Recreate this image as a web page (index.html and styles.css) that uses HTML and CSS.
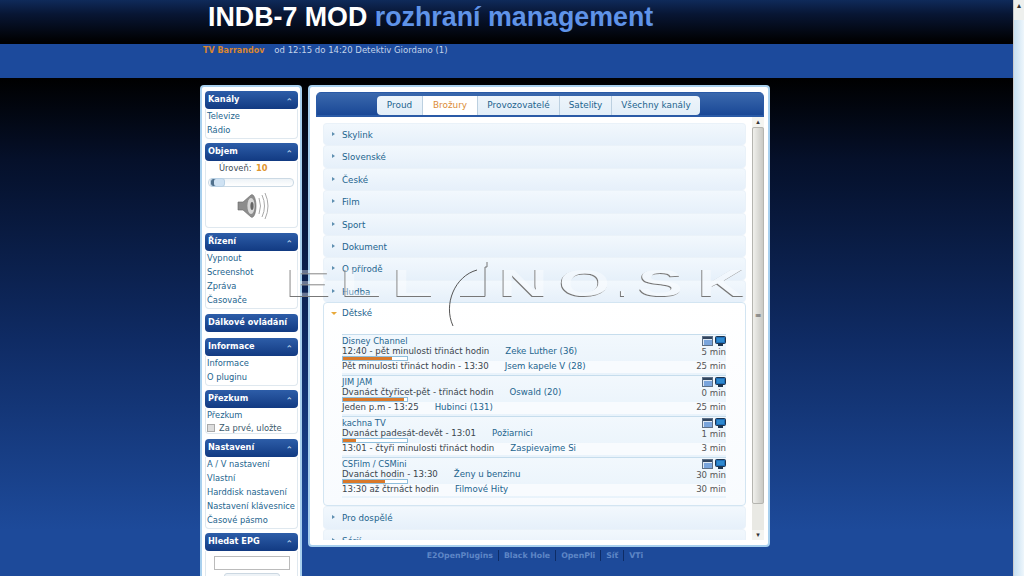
FILE: index.html
```html
<!DOCTYPE html>
<html lang="cs">
<head>
<meta charset="utf-8">
<title>INDB-7 MOD rozhraní management</title>
<link rel="stylesheet" href="styles.css">
</head>
<body>
<svg class="defs" width="0" height="0">
  <symbol id="win" viewBox="0 0 11 10"><rect x=".5" y=".5" width="10" height="9" fill="#dfe8f2" stroke="#5c6f86"/><rect x="1" y="1" width="9" height="2" fill="#33465f"/><rect x="2" y="4" width="8" height="5" fill="#7aa5dc"/></symbol>
  <symbol id="mon" viewBox="0 0 11 10"><rect x=".5" y=".5" width="10" height="7" rx="1" fill="#1f6fb8" stroke="#1d3550"/><rect x="2" y="2" width="7" height="4" fill="#2f8ad0"/><rect x="3" y="8" width="5" height="2" fill="#1d3550"/></symbol>
</svg>
<div class="viewport">
  <div class="page">
    <header class="head">
      <h1 class="title">INDB-7 MOD <span class="title-accent">rozhraní management</span></h1>
    </header>
    <div class="now-bar">
      <span class="now-channel">TV Barrandov</span>
      <span class="now-text">od 12:15 do 14:20 Detektiv Giordano (1)</span>
    </div>
    <div class="content">
      <aside class="side">
        <section class="box box-kanaly">
          <h2 class="box-head">Kanály<span class="chev">⌃</span></h2>
          <div class="box-body"><a>Televize</a><a>Rádio</a></div>
        </section>
        <section class="box box-objem">
          <h2 class="box-head">Objem<span class="chev">⌃</span></h2>
          <div class="box-body vol">
            <div class="vol-label">Úroveň: <b>10</b></div>
            <div class="slider"><span class="knob"></span></div>
            <svg class="speaker" width="34" height="28" viewBox="0 0 34 28">
              <path d="M2 10h5l8-7c3-2 5 5 5 11s-2 13-5 11l-8-7H2z" fill="#8d8d8d" stroke="#666" stroke-width=".6"/>
              <ellipse cx="15" cy="14" rx="3.6" ry="8" fill="#d8d8d8"/>
              <ellipse cx="16" cy="14" rx="1.6" ry="4" fill="#666"/>
              <path d="M23 6q3 8 0 16M26 3q5 11 0 22M29 1q6 13 0 26" fill="none" stroke="#a9a9a9"/>
            </svg>
          </div>
        </section>
        <section class="box box-rizeni">
          <h2 class="box-head">Řízení<span class="chev">⌃</span></h2>
          <div class="box-body"><a>Vypnout</a><a>Screenshot</a><a>Zpráva</a><a>Časovače</a></div>
        </section>
        <section class="box box-dalk">
          <h2 class="box-head">Dálkové ovládání</h2>
        </section>
        <section class="box box-info">
          <h2 class="box-head">Informace<span class="chev">⌃</span></h2>
          <div class="box-body"><a>Informace</a><a>O pluginu</a></div>
        </section>
        <section class="box box-prez">
          <h2 class="box-head">Přezkum<span class="chev">⌃</span></h2>
          <div class="box-body prez"><a>Přezkum</a><label class="check"><span class="checkbox"></span>Za prvé, uložte</label></div>
        </section>
        <section class="box box-nast">
          <h2 class="box-head">Nastavení<span class="chev">⌃</span></h2>
          <div class="box-body"><a>A / V nastavení</a><a>Vlastní</a><a>Harddisk nastavení</a><a>Nastavení klávesnice</a><a>Časové pásmo</a></div>
        </section>
        <section class="box box-epg">
          <h2 class="box-head">Hledat EPG<span class="chev">⌃</span></h2>
          <div class="box-body epg"><span class="epg-input"></span><span class="epg-btn"></span></div>
        </section>
      </aside>
      <div class="main-col">
        <main class="panel">
          <nav class="tabbar">
            <a class="tab tab-first">Proud</a><a class="tab tab-active">Brožury</a><a class="tab">Provozovatelé</a><a class="tab">Satelity</a><a class="tab tab-last">Všechny kanály</a>
          </nav>
          <div class="scroll-wrap">
            <div class="accordion">
              <div class="acc">Skylink</div>
              <div class="acc">Slovenské</div>
              <div class="acc">České</div>
              <div class="acc">Film</div>
              <div class="acc">Sport</div>
              <div class="acc">Dokument</div>
              <div class="acc">O přírodě</div>
              <div class="acc">Hudba</div>
              <div class="acc-open">
                <div class="acc-open-head">Dětské</div>
                <div class="channels">
                  <article class="chan">
                    <div class="chan-top"><a>Disney Channel</a><span class="icons"><svg width="11" height="10"><use href="#win"/></svg><svg width="11" height="10"><use href="#mon"/></svg></span></div>
                    <div class="prog"><span class="prog-time">12:40 - pět minulosti třináct hodin</span><a>Zeke Luther (36)</a><span class="mins">5 min</span></div>
                    <div class="bar"><span class="bar-fill" style="width:77%"></span></div>
                    <div class="prog next"><span class="prog-time">Pět minulosti třináct hodin - 13:30</span><a>Jsem kapele V (28)</a><span class="mins">25 min</span></div>
                  </article>
                  <article class="chan">
                    <div class="chan-top"><a>JIM JAM</a><span class="icons"><svg width="11" height="10"><use href="#win"/></svg><svg width="11" height="10"><use href="#mon"/></svg></span></div>
                    <div class="prog"><span class="prog-time">Dvanáct čtyřicet-pět - třináct hodin</span><a>Oswald (20)</a><span class="mins">0 min</span></div>
                    <div class="bar"><span class="bar-fill" style="width:95%"></span></div>
                    <div class="prog next"><span class="prog-time">Jeden p.m - 13:25</span><a>Hubinci (131)</a><span class="mins">25 min</span></div>
                  </article>
                  <article class="chan">
                    <div class="chan-top"><a>kachna TV</a><span class="icons"><svg width="11" height="10"><use href="#win"/></svg><svg width="11" height="10"><use href="#mon"/></svg></span></div>
                    <div class="prog"><span class="prog-time">Dvanáct padesát-devět - 13:01</span><a>Požiarnici</a><span class="mins">1 min</span></div>
                    <div class="bar"><span class="bar-fill" style="width:20%"></span></div>
                    <div class="prog next"><span class="prog-time">13:01 - čtyři minulosti třináct hodin</span><a>Zaspievajme Si</a><span class="mins">3 min</span></div>
                  </article>
                  <article class="chan">
                    <div class="chan-top"><a>CSFilm / CSMini</a><span class="icons"><svg width="11" height="10"><use href="#win"/></svg><svg width="11" height="10"><use href="#mon"/></svg></span></div>
                    <div class="prog"><span class="prog-time">Dvanáct hodin - 13:30</span><a>Ženy u benzinu</a><span class="mins">30 min</span></div>
                    <div class="bar"><span class="bar-fill" style="width:65%"></span></div>
                    <div class="prog next"><span class="prog-time">13:30 až čtrnáct hodin</span><a>Filmové Hity</a><span class="mins">30 min</span></div>
                  </article>
                </div>
              </div>
              <div class="acc">Pro dospělé</div>
              <div class="acc">Sérií</div>
            </div>
            <div class="inner-scroll">
              <span class="sb-btn">▴</span>
              <span class="sb-thumb"><span class="sb-grip">≡</span></span>
              <span class="sb-btn">▾</span>
            </div>
          </div>
        </main>
        <footer class="foot"><a>E2OpenPlugins</a><a>Black Hole</a><a>OpenPli</a><a>Síť</a><a>VTi</a></footer>
      </div>
    </div>
  </div>
  <div class="page-scroll"><span class="ps-btn">▴</span><span class="ps-thumb"></span></div>
</div>
<svg class="watermark" width="480" height="70" viewBox="0 0 480 70">
  <defs>
    <filter id="emboss" x="-5%" y="-20%" width="110%" height="140%">
      <feOffset in="SourceAlpha" dx="1" dy="-1" result="o"/>
      <feComposite in="SourceAlpha" in2="o" operator="out" result="e"/>
      <feFlood flood-color="#777" result="c"/>
      <feComposite in="c" in2="e" operator="in" result="edge"/>
      <feFlood flood-color="#fff" flood-opacity=".38" result="w"/>
      <feComposite in="w" in2="SourceAlpha" operator="in" result="fill"/>
      <feMerge><feMergeNode in="fill"/><feMergeNode in="edge"/></feMerge>
    </filter>
  </defs>
  <g class="wm-text" filter="url(#emboss)">
    <text x="6" y="37" textLength="46" lengthAdjust="spacingAndGlyphs">E</text>
    <text x="61" y="37" textLength="41" lengthAdjust="spacingAndGlyphs">L</text>
    <text x="113" y="37" textLength="41" lengthAdjust="spacingAndGlyphs">L</text>
    <text x="219" y="37" textLength="50" lengthAdjust="spacingAndGlyphs">N</text>
    <text x="279" y="37" textLength="52" lengthAdjust="spacingAndGlyphs">O</text>
    <text x="339" y="37" textLength="8" lengthAdjust="spacingAndGlyphs">.</text>
    <text x="358" y="37" textLength="46" lengthAdjust="spacingAndGlyphs">S</text>
    <text x="418" y="37" textLength="47" lengthAdjust="spacingAndGlyphs">K</text>
  </g>
  <path d="M198 10C176 16 164 44 174 66" fill="none" stroke="#555" stroke-width="1"/>
  <path d="M181 36.500h25V7h2V2" fill="none" stroke="#777" stroke-width="1"/>
</svg>
</body>
</html>
```

FILE: styles.css
```css
* { box-sizing: border-box; }
html, body { margin: 0; height: 100%; overflow: hidden; }
body { font-family: "DejaVu Sans", Verdana, sans-serif; font-size: 8.3px; color: #3a4a55; background: #000; position: relative; }
.defs { position: absolute; }
a { color: #23648e; }
.viewport { display: flex; height: 576px; width: 1024px; }
.page { flex: 1; min-width: 0; display: flex; flex-direction: column; background: linear-gradient(180deg, #000 78px, #05102a 160px, #0f2b64 340px, #1d4a9a 530px); }
.head { height: 44px; flex: none; padding: 2px 0 0 208px; background: linear-gradient(180deg, #0f2a5a 0, #081634 14px, #000 42px); }
.title { margin: 0; font: bold 26.8px/30px "Liberation Sans", Arial, sans-serif; color: #fff; white-space: nowrap; }
.title-accent { color: #5f93e8; }
.now-bar { height: 34px; flex: none; padding: 0 0 0 203px; line-height: 13px; background: #1c4a9c; color: #c2d3ea; display: flex; gap: 10px; font-size: 8.5px; }
.now-channel { color: #d9862f; font-weight: bold; font-size: 8px; }
.content { flex: 1; min-height: 0; display: flex; padding: 7px 0 0 200px; gap: 6px; align-items: flex-start; }

/* sidebar */
.side { width: 102px; flex: none; height: 500px; background: #fff; border: 2px solid #a8d0ee; border-bottom: 0; border-radius: 4px 4px 0 0; padding: 4px 2px 0 3px; }
.box { margin-bottom: 5px; }
.box-kanaly, .box-info, .box-nast { margin-bottom: 4px; }
.box-dalk { margin-bottom: 6px; }
.box-head { margin: 0; height: 18px; border-radius: 4px; background: linear-gradient(180deg, #2d5da8, #123a82); color: #fff; font-size: 8.2px; font-weight: bold; line-height: 17px; padding: 0 3px; position: relative; }
.chev { position: absolute; right: 5px; top: 3px; font-size: 9px; font-weight: normal; color: #cfe0f4; }
.box-body { display: flex; flex-direction: column; border: 1px solid #dfe8ef; border-top: 0; border-radius: 0 0 4px 4px; padding: 0 1px 1px; }
.box-body a { line-height: 14px; height: 14px; white-space: nowrap; }
.vol { height: 67px; align-items: flex-start; }
.vol-label { padding-left: 12px; line-height: 14px; color: #3a4a55; }
.vol-label b { color: #e0962f; margin-left: 2px; }
.slider { width: 86px; height: 9px; margin: 3px 0 0 1px; border: 1px solid #cbd9e4; border-radius: 4px; background: linear-gradient(180deg, #eef3f7, #fff); flex: none; }
.knob { display: block; width: 15px; height: 9px; margin: -1px 0 0 1px; border-radius: 3px; background: #cfe2f3; border: 1px solid #b8d0e4; box-shadow: inset 3px 0 0 #50708c; }
.speaker { margin: 5px 0 0 29px; flex: none; }
.prez { padding-bottom: 0; height: 26px; }
.check { display: flex; align-items: center; gap: 4px; height: 12px; color: #3a5a6c; white-space: nowrap; }
.checkbox { width: 8px; height: 8px; background: #ddd; border: 1px solid #aaa; }
.epg { align-items: center; padding-top: 5px; }
.epg-input { width: 76px; height: 14px; background: #fff; border: 1px solid #bbb; flex: none; }
.epg-btn { width: 56px; height: 14px; margin-top: 3px; background: #eef3f7; border: 1px solid #ccd8e2; border-radius: 3px; flex: none; }

/* main */
.main-col { width: 462px; flex: none; display: flex; flex-direction: column; align-items: stretch; }
.panel { height: 462px; flex: none; background: #fff; border: 2px solid #a8d0ee; border-radius: 4px; padding: 5px 4px 5px 6px; display: flex; flex-direction: column; }
.tabbar { height: 25px; flex: none; display: flex; justify-content: flex-start; padding: 3px 0 0 60px; border-radius: 5px 5px 0 0; background: linear-gradient(180deg, #3b69ad, #1a4896); border: 1px solid #2a5aa6; border-bottom-width: 2px; font-size: 8.9px; }
.tab { height: 19px; line-height: 18px; background: linear-gradient(180deg, #eef5fb, #e2eef8); border-right: 1px solid #bcd0e0; text-align: center; white-space: nowrap; }
.tab-first { width: 46px; border-radius: 4px 0 0 4px; }
.tab-active { width: 55px; background: #fff; color: #db8c36; }
.tab:nth-child(3) { width: 82px; }
.tab:nth-child(4) { width: 52px; }
.tab-last { width: 88px; border-radius: 0 4px 4px 0; border-right: 0; }
.scroll-wrap { flex: 1; min-height: 0; display: flex; }
.accordion { flex: 1; min-width: 0; overflow: hidden; padding: 6px 6px 0 7px; }
.acc { height: 22.4px; padding: 5px 0 0 18px; border-radius: 4px; border: 1px solid #eaf2f9; border-width: 1px 1px 0; background: linear-gradient(180deg, #f2f8fd, #e6f0fa); color: #23648e; font-size: 8.7px; line-height: 13px; position: relative; }
.acc::before { content: ""; position: absolute; left: 8px; top: 8px; border: 2px solid transparent; border-left: 3px solid #5e8fb0; }
.acc-open { height: 204px; border: 1px solid #d3e5f2; border-radius: 4px; background: linear-gradient(180deg, #fff, #f8fbfe); position: relative; }
.acc-open-head { height: 26px; padding: 4px 0 0 18px; font-size: 8.7px; line-height: 13px; color: #23648e; }
.acc-open-head::before { content: ""; position: absolute; left: 7px; top: 9px; border: 3px solid transparent; border-top: 3px solid #e8a93a; }
.channels { margin: 5px 19px 0 18px; }
.chan { height: 41px; border-top: 1px solid #c6dded; background: linear-gradient(180deg, #f2f8fd, #e9f3fb); position: relative; }
.chan-top { display: flex; justify-content: space-between; height: 10px; line-height: 12px; font-size: 8.4px; }
.icons { display: flex; gap: 2px; height: 10px; margin-top: 1px; }
.prog { display: flex; gap: 16px; height: 10px; line-height: 13px; white-space: nowrap; font-size: 8.6px; }
.prog-time { color: #38444c; }
.mins { margin-left: auto; color: #555; margin-top: 1px; }
.next { height: 12px; line-height: 11px; background: #f8fbfe; }
.next .mins { margin-top: 0; }
.bar { width: 66px; height: 5px; margin-top: 1px; border: 1px solid #8fbfdd; background: #fff; }
.bar-fill { display: block; height: 3px; background: #d9792a; }
.inner-scroll { width: 12px; flex: none; display: flex; flex-direction: column; background: #e9e9e4; }
.sb-btn { height: 10px; font-size: 7px; line-height: 10px; text-align: center; color: #333; background: #f4f4f0; flex: none; }
.sb-thumb { flex: 1; background: linear-gradient(90deg, #f0f0ec, #c9c9c4); border: 1px solid #b5b5b0; border-radius: 2px; display: flex; align-items: center; justify-content: center; margin-bottom: 26px; }
.sb-grip { font-size: 8px; color: #555; }
.foot { display: flex; justify-content: center; padding: 3px 8px 0 0; font-weight: bold; font-size: 7.8px; line-height: 11px; }
.foot a { color: #5d86c6; padding: 0 5px; border-left: 1px solid #0e2c66; }
.foot a:first-child { border-left: 0; }
.page-scroll { width: 11px; flex: none; display: flex; flex-direction: column; background: #eef0ee; border-left: 1px solid #ccc; }
.ps-btn { height: 12px; font-size: 8px; line-height: 12px; text-align: center; color: #333; flex: none; }
.ps-thumb { flex: 1; margin-top: 8px; background: linear-gradient(90deg, #c7e0f2, #eef6fb); }

/* watermark */
.watermark { position: absolute; left: 279px; top: 260px; pointer-events: none; }
.wm-text text { font: bold 38px "Liberation Sans", Arial, sans-serif; fill: #fff; }
```
